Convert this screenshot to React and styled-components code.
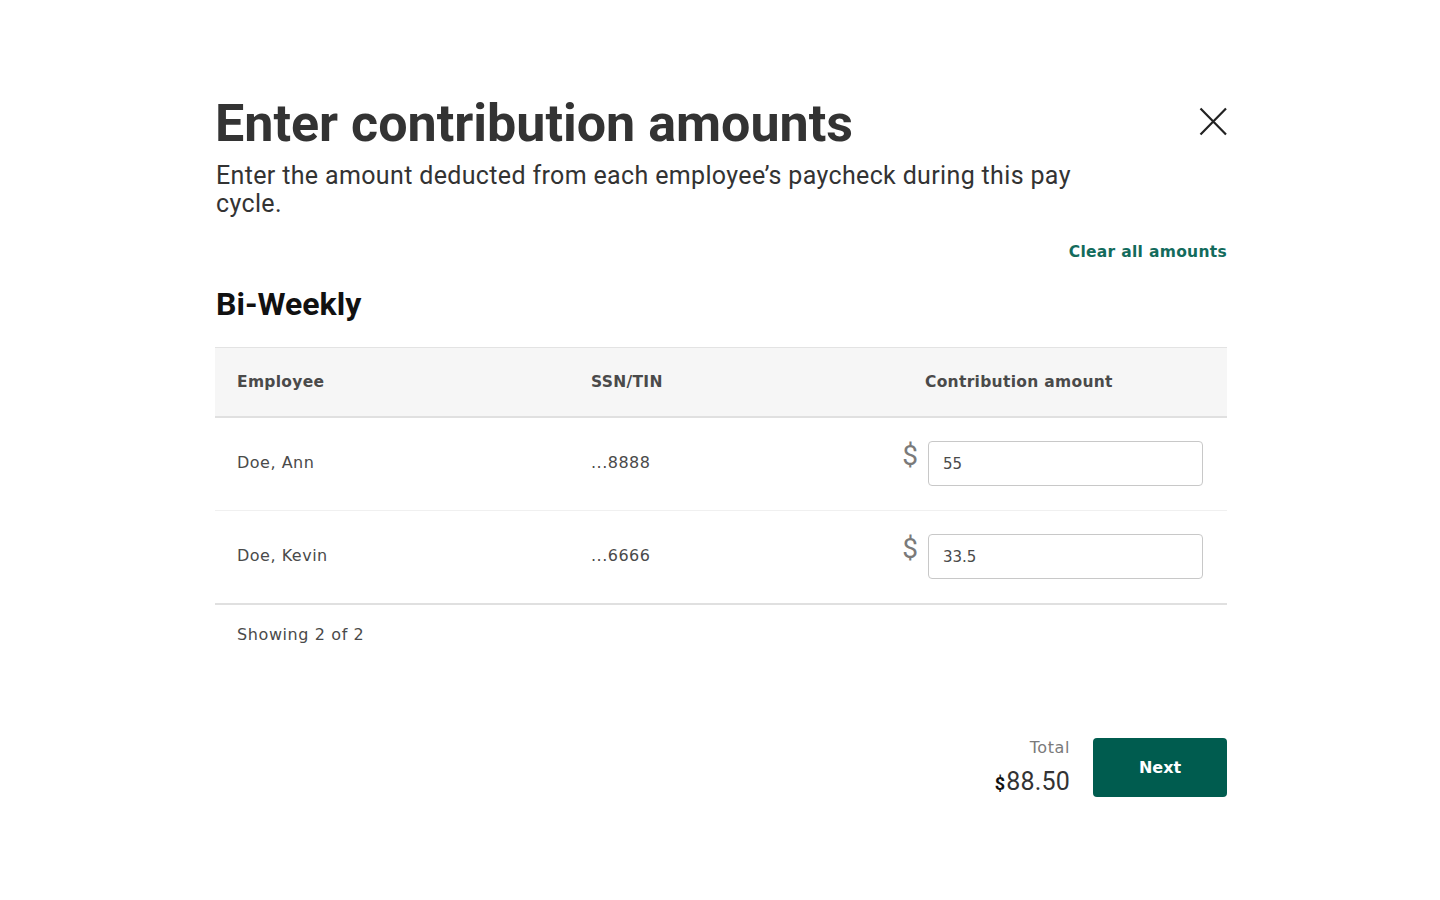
import React from "react";
import styled, { createGlobalStyle } from "styled-components";

const GlobalStyle = createGlobalStyle`
  html, body {
    margin: 0;
    padding: 0;
    background: #ffffff;
  }
  body {
    font-family: "Roboto", "Liberation Sans", sans-serif;
    color: #333333;
  }
`;

const Page = styled.div`
  width: 1440px;
  min-height: 900px;
  box-sizing: border-box;
  padding-left: 215px;
`;

const Modal = styled.div`
  width: 1012px;
  padding-top: 96px;
  display: flex;
  flex-direction: column;
`;

const HeaderRow = styled.div`
  display: flex;
  justify-content: space-between;
  align-items: flex-start;
`;

const Title = styled.h1`
  margin: 0;
  font-family: "Roboto", sans-serif;
  font-weight: 700;
  font-size: 52px;
  line-height: 56px;
  color: #333333;
`;

const CloseButton = styled.button`
  border: none;
  background: none;
  padding: 0;
  margin-top: 11px;
  width: 29px;
  height: 29px;
  cursor: pointer;
  display: flex;
`;

const Subtitle = styled.p`
  margin: 10px 0 0 1px;
  max-width: 880px;
  font-size: 25px;
  line-height: 28px;
  color: #333333;
  letter-spacing: 0.35px;
`;

const ClearRow = styled.div`
  display: flex;
  justify-content: flex-end;
  margin-top: 24px;
`;

const LinkButton = styled.button`
  border: none;
  background: none;
  padding: 0;
  font-family: "DejaVu Sans", "Verdana", sans-serif;
  font-size: 15.5px;
  line-height: 20px;
  font-weight: 700;
  color: #136b5c;
  letter-spacing: 0.3px;
  cursor: pointer;
`;

const SectionTitle = styled.h2`
  margin: 23px 0 0 1px;
  font-size: 32px;
  font-weight: 700;
  color: #111111;
  line-height: 38px;
`;

const Table = styled.div`
  margin-top: 24px;
  display: flex;
  flex-direction: column;
  font-family: "DejaVu Sans", "Verdana", sans-serif;
`;

const Grid = `
  display: grid;
  grid-template-columns: 354px 334px minmax(0, 1fr);
  align-items: center;
  padding: 0 24px 0 22px;
`;

const HeadRow = styled.div`
  ${Grid}
  height: 68px;
  background: #f6f6f6;
  border-top: 1px solid #e3e3e3;
  border-bottom: 2px solid #e0e0e0;
`;

const HeadCell = styled.div`
  font-size: 15.5px;
  font-weight: 700;
  color: #4a4a4a;
  letter-spacing: 0.3px;
`;

const BodyRow = styled.div`
  ${Grid}
  height: 92px;
  border-bottom: ${(p) => (p.$last ? "2px solid #e0e0e0" : "1px solid #f0f0f0")};
`;

const Cell = styled.div`
  font-size: 16px;
  line-height: 20px;
  margin-top: -3px;
  color: #4a4a4a;
  letter-spacing: 0.5px;
`;

const AmountCell = styled.div`
  display: flex;
  justify-content: flex-end;
  align-items: flex-start;
  gap: 10px;
  margin-top: -2px;
`;

const Dollar = styled.span`
  font-family: "Roboto", sans-serif;
  font-size: 28px;
  line-height: 30px;
  color: #7a7a7a;
  margin-top: 0;
`;

const AmountInput = styled.input`
  box-sizing: border-box;
  flex-shrink: 0;
  width: 275px;
  height: 45px;
  border: 1px solid #c8c8c8;
  border-radius: 4px;
  padding: 2px 14px 0;
  font-family: "DejaVu Sans", "Verdana", sans-serif;
  font-size: 15px;
  color: #4a4a4a;
  background: #ffffff;
  outline: none;
`;

const Showing = styled.div`
  padding: 20px 22px 0;
  font-size: 16px;
  line-height: 20px;
  color: #4a4a4a;
  letter-spacing: 0.6px;
`;

const Footer = styled.div`
  margin-top: 93px;
  display: flex;
  justify-content: flex-end;
  align-items: flex-start;
  gap: 23px;
`;

const TotalBlock = styled.div`
  display: flex;
  flex-direction: column;
  align-items: flex-end;
`;

const TotalLabel = styled.span`
  font-family: "DejaVu Sans", "Verdana", sans-serif;
  font-size: 16px;
  color: #7a7a7a;
  line-height: 20px;
  letter-spacing: 0.6px;
`;

const TotalValue = styled.span`
  margin-top: 9px;
  font-size: 25px;
  line-height: 30px;
  color: #333333;
  letter-spacing: 0.2px;
`;

const Currency = styled.span`
  font-size: 18px;
  font-weight: 700;
  color: #111111;
  margin-right: 1px;
`;

const PrimaryButton = styled.button`
  width: 134px;
  height: 59px;
  border: none;
  border-radius: 4px;
  background: #005c4f;
  color: #ffffff;
  font-family: "DejaVu Sans", "Verdana", sans-serif;
  font-size: 16px;
  font-weight: 700;
  cursor: pointer;
`;

const rows = [
  { name: "Doe, Ann", ssn: "...8888", amount: "55" },
  { name: "Doe, Kevin", ssn: "...6666", amount: "33.5" },
];

export default function App() {
  return (
    <>
      <GlobalStyle />
      <Page>
        <Modal>
          <HeaderRow>
            <Title>Enter contribution amounts</Title>
            <CloseButton aria-label="Close">
              <svg width="29" height="29" viewBox="0 0 29 29">
                <path d="M2.5 1.5 L28 27.5 M28 1.5 L2.5 27.5" stroke="#222" strokeWidth="2.2" />
              </svg>
            </CloseButton>
          </HeaderRow>
          <Subtitle>
            Enter the amount deducted from each employee’s paycheck during this pay cycle.
          </Subtitle>
          <ClearRow>
            <LinkButton>Clear all amounts</LinkButton>
          </ClearRow>
          <SectionTitle>Bi-Weekly</SectionTitle>
          <Table>
            <HeadRow>
              <HeadCell>Employee</HeadCell>
              <HeadCell>SSN/TIN</HeadCell>
              <HeadCell>Contribution amount</HeadCell>
            </HeadRow>
            {rows.map((r, i) => (
              <BodyRow key={r.name} $last={i === rows.length - 1}>
                <Cell>{r.name}</Cell>
                <Cell>{r.ssn}</Cell>
                <AmountCell>
                  <Dollar>$</Dollar>
                  <AmountInput defaultValue={r.amount} />
                </AmountCell>
              </BodyRow>
            ))}
            <Showing>Showing 2 of 2</Showing>
          </Table>
          <Footer>
            <TotalBlock>
              <TotalLabel>Total</TotalLabel>
              <TotalValue>
                <Currency>$</Currency>88.50
              </TotalValue>
            </TotalBlock>
            <PrimaryButton>Next</PrimaryButton>
          </Footer>
        </Modal>
      </Page>
    </>
  );
}
